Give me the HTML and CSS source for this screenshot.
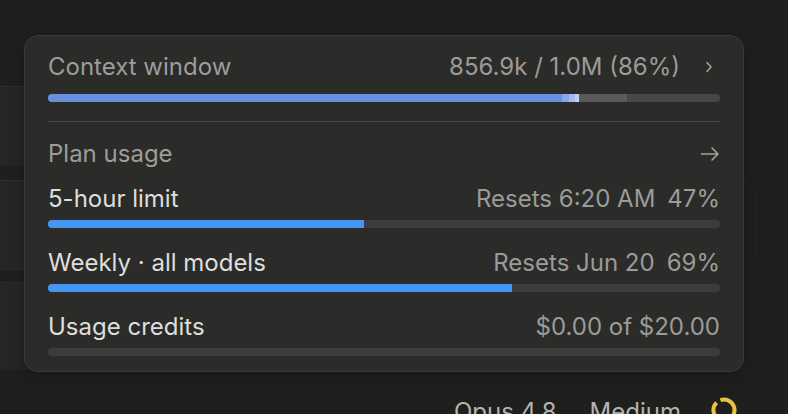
FILE: index.html
```html
<!DOCTYPE html>
<html lang="en">
<head>
  <meta charset="UTF-8">
  <meta name="viewport" content="width=device-width, initial-scale=1.0">
  <title>Usage</title>
  <link rel="stylesheet" href="styles.css">
</head>
<body>
  <!-- Page behind the popover -->
  <div class="backdrop">
    <div class="panel panel-one"></div>
    <div class="panel panel-two"></div>
    <div class="panel panel-three"></div>

    <div class="statusbar">
      <span>Opus 4.8</span>
      <span>Medium</span>
      <svg class="ring" width="26" height="26" viewBox="0 0 26 26">
        <circle cx="13" cy="13" r="10.5" fill="none" stroke="#E9C53E" stroke-width="4" stroke-dasharray="61 5" transform="rotate(-110 13 13)"/>
      </svg>
    </div>
  </div>

  <div class="ghost"></div>

  <!-- Usage popover -->
  <div class="popover">
    <div class="row">
      <span class="muted-label">Context window</span>
      <span class="value-group">
        <span class="value">856.9k / 1.0M (86%)</span>
        <svg class="chevron" width="16" height="16" viewBox="0 0 16 16">
          <path d="M3 3.5L7 8L3 12.5" fill="none" stroke="#A3A39F" stroke-width="1.5" stroke-linecap="round" stroke-linejoin="round"/>
        </svg>
      </span>
    </div>
    <div class="bar context-bar">
      <div class="seg seg-blue" style="width: 514px"></div>
      <div class="seg seg-a" style="width: 7px"></div>
      <div class="seg seg-b" style="width: 6px"></div>
      <div class="seg seg-c" style="width: 4px"></div>
      <div class="seg seg-gray" style="width: 48px"></div>
    </div>

    <div class="divider"></div>

    <div class="row plan-row">
      <span class="muted-label">Plan usage</span>
      <svg class="arrow" width="20" height="20" viewBox="0 0 20 20">
        <path d="M1.5 10H18M12 4L18 10L12 16" fill="none" stroke="#A3A39F" stroke-width="1.6" stroke-linecap="round" stroke-linejoin="round"/>
      </svg>
    </div>

    <div class="usage">
      <div class="row">
        <span class="label">5-hour limit</span>
        <span class="value-group tight">
          <span class="value">Resets 6:20 AM</span>
          <span class="value">47%</span>
        </span>
      </div>
      <div class="bar"><div class="fill" style="width: 47%"></div></div>
    </div>

    <div class="usage">
      <div class="row">
        <span class="label">Weekly · all models</span>
        <span class="value-group tight">
          <span class="value">Resets Jun 20</span>
          <span class="value">69%</span>
        </span>
      </div>
      <div class="bar"><div class="fill" style="width: 69%"></div></div>
    </div>

    <div class="usage">
      <div class="row">
        <span class="label">Usage credits</span>
        <span class="value">$0.00 of $20.00</span>
      </div>
      <div class="bar"><div class="fill" style="width: 0%"></div></div>
    </div>
  </div>
</body>
</html>
```

FILE: styles.css
```css
body {
  margin: 0;
  width: 788px;
  height: 414px;
  overflow: hidden;
  background-color: #1F1F1E;
  font-family: Inter, "Noto Sans", sans-serif;
  font-size: 24px;
  line-height: 30px;
  position: relative;
}

/* Background page */
.backdrop {
  display: flex;
  flex-direction: column;
  padding-top: 86px;
}

.panel {
  width: 740px;
  background-color: #262625;
  border-top: 1px solid #2F2F2E;
  box-sizing: border-box;
}

.panel-one {
  height: 80px;
  margin-bottom: 14px;
}

.panel-two {
  height: 91px;
  margin-bottom: 11px;
}

.panel-three {
  height: 88px;
}

.statusbar {
  display: flex;
  justify-content: flex-end;
  align-items: flex-start;
  gap: 33px;
  margin-top: 27px;
  padding-right: 51px;
  color: #B4B4AF;
}

.statusbar .ring {
  margin-top: 0;
  margin-left: -3px;
}

.ghost {
  position: absolute;
  left: 600px;
  top: 182px;
  width: 154px;
  height: 84px;
  border: 1px solid #252524;
  border-radius: 12px;
}

/* Popover */
.popover {
  position: absolute;
  left: 24px;
  top: 35px;
  width: 720px;
  box-sizing: border-box;
  padding: 16px 23px 15px 23px;
  background-color: #2B2B2A;
  border: 1px solid #3B3B39;
  border-radius: 14px;
  box-shadow: 0 6px 18px rgba(0, 0, 0, 0.25);
}

.row {
  display: flex;
  justify-content: space-between;
  align-items: center;
  height: 30px;
}

.muted-label {
  color: #9D9D99;
}

.label {
  color: #DEDEDA;
}

.value {
  color: #9B9B97;
}

.value-group {
  display: flex;
  align-items: center;
  gap: 24px;
}

.value-group.tight {
  gap: 12px;
}

.bar {
  display: flex;
  height: 8px;
  margin-top: 6px;
  border-radius: 4px;
  background-color: #3C3C3A;
  overflow: hidden;
}

.fill {
  height: 100%;
  background-color: #4595F4;
}

.context-bar {
  margin-top: 12px;
  background-color: #474745;
}

.seg {
  height: 100%;
}

.seg-blue { background-color: #6890DE; }
.seg-a { background-color: #88A5E6; }
.seg-b { background-color: #A3B9EE; }
.seg-c { background-color: #C0CFF4; }
.seg-gray { background-color: #5A5A58; }

.divider {
  height: 1px;
  margin: 19px 0 17px;
  background-color: #454543;
}

.plan-row {
  margin-bottom: 15px;
}

.usage + .usage {
  margin-top: 20px;
}
```
